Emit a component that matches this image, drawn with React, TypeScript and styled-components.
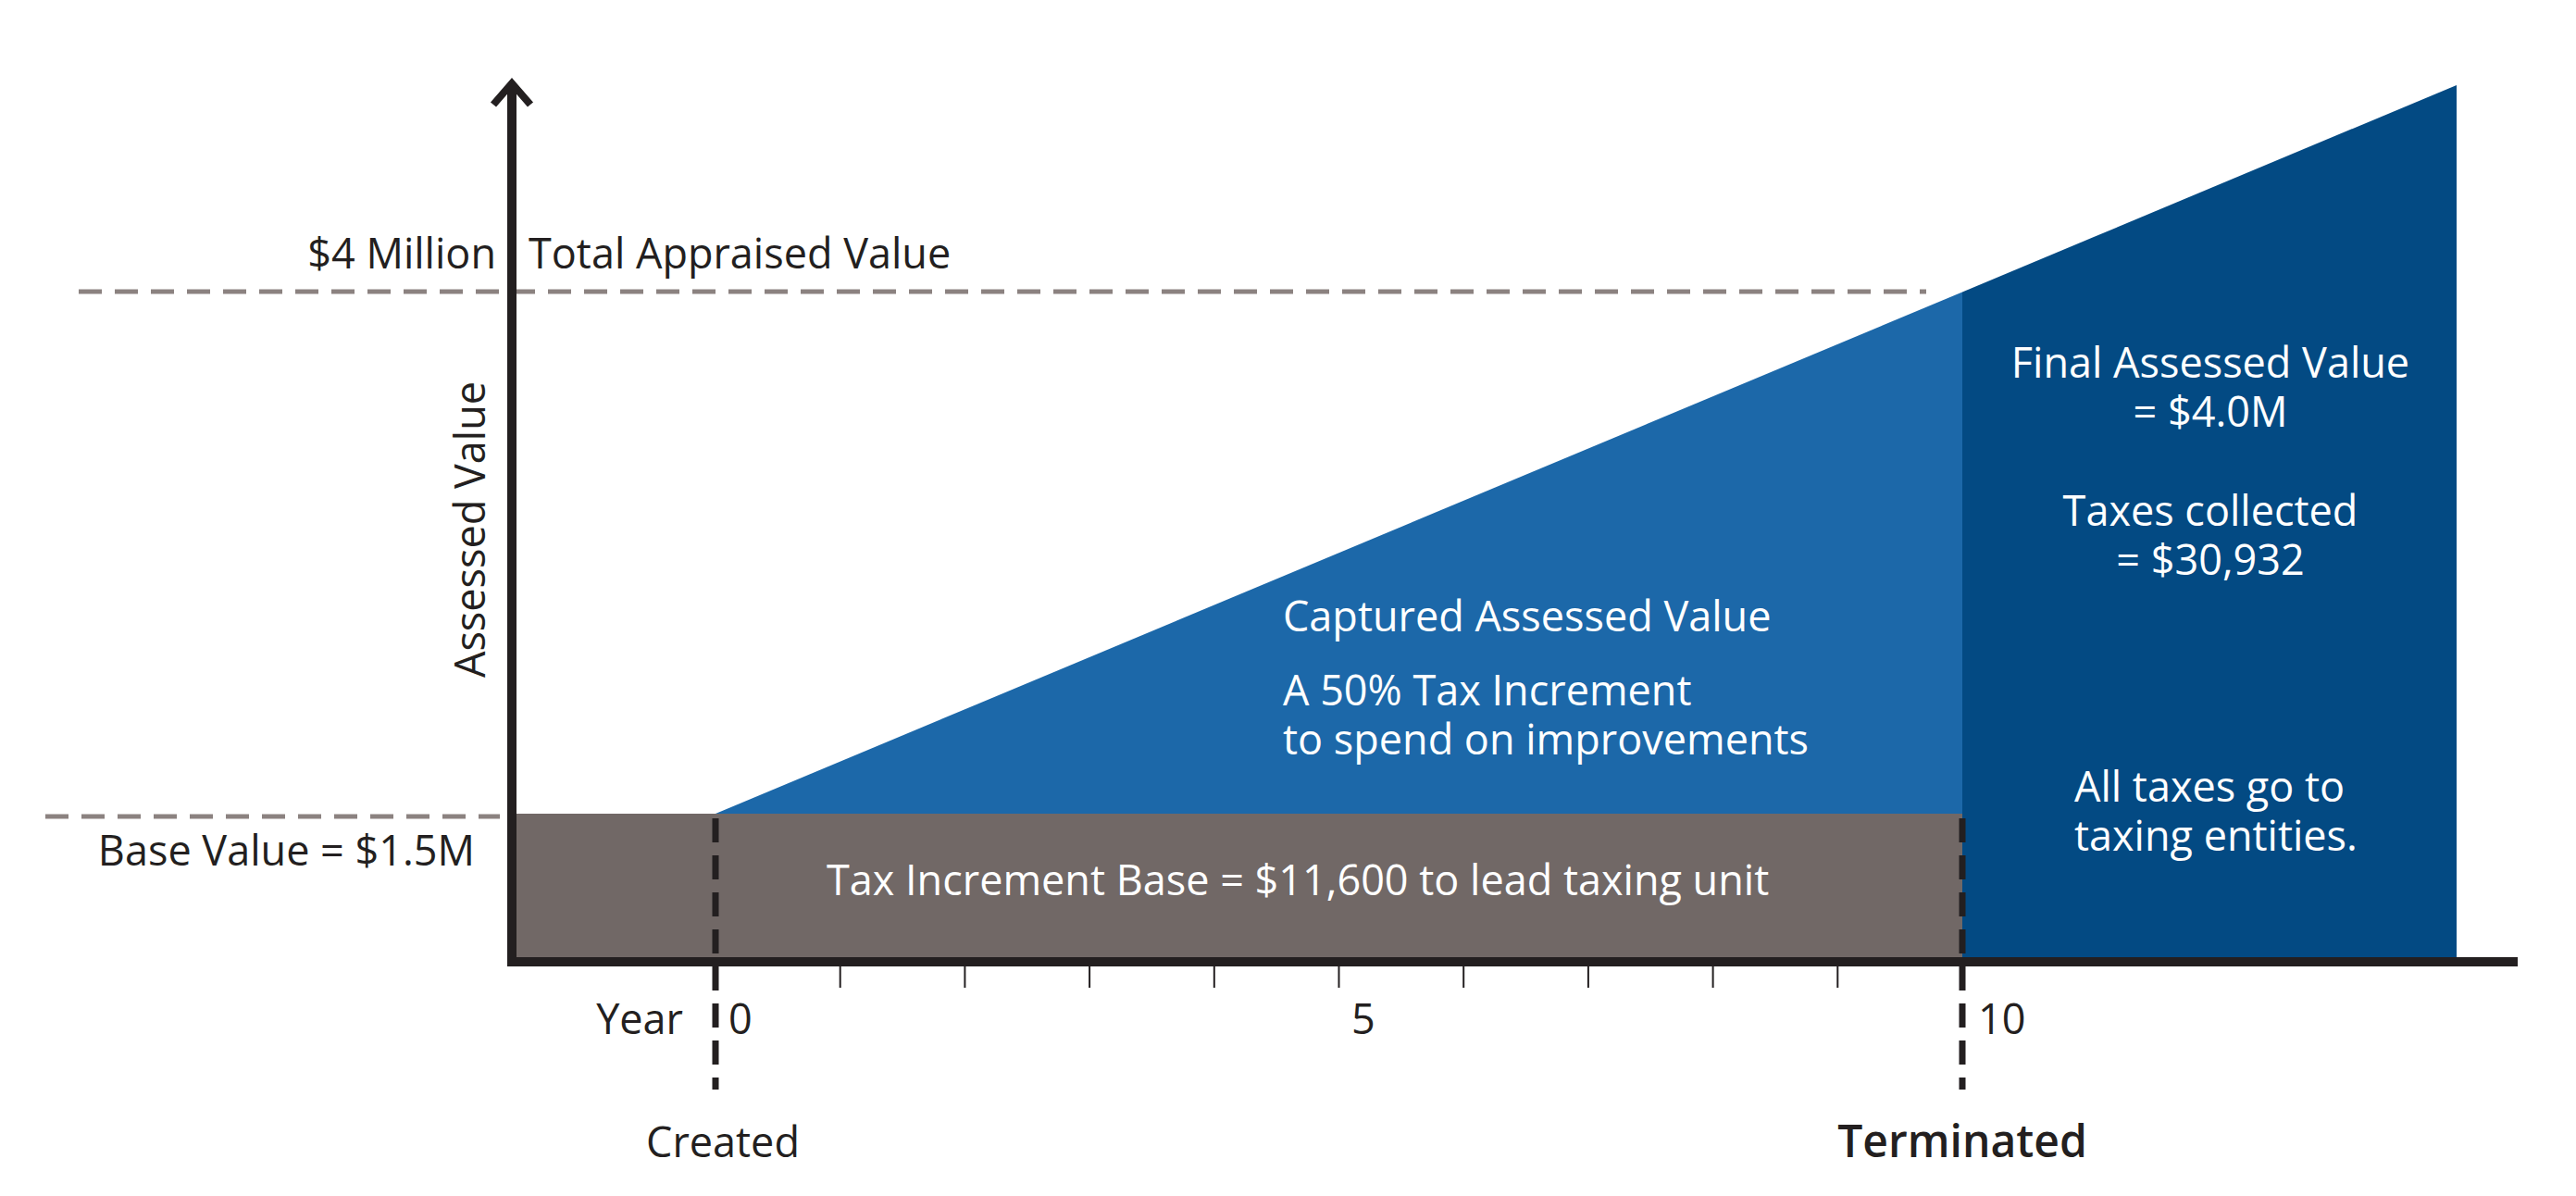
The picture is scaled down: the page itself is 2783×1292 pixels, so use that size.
import React from 'react';
import styled, { createGlobalStyle } from 'styled-components';

const GlobalStyle = createGlobalStyle`
  html, body {
    margin: 0;
    padding: 0;
    background: #ffffff;
  }
`;

const colors = {
  ink: '#231f20',
  dash: '#8b8280',
  base: '#716866',
  captured: '#1c68a9',
  final: '#034a83',
};

const Page = styled.div`
  width: 2783px;
  height: 1292px;
  background: #ffffff;
  overflow: hidden;
`;

const Chart = styled.svg`
  display: block;
  width: 2783px;
  height: 1292px;
`;

const Label = styled.text<{ $light?: boolean; $weight?: number; $size?: number }>`
  font-family: 'Open Sans', 'Noto Sans', sans-serif;
  font-size: ${(p) => p.$size ?? 45}px;
  font-weight: ${(p) => p.$weight ?? 400};
  fill: ${(p) => (p.$light ? '#ffffff' : colors.ink)};
`;

const GuideLine = styled.line`
  stroke: ${colors.dash};
  stroke-width: 5;
  stroke-dasharray: 25 14;
`;

const MarkerLine = styled.line`
  stroke: ${colors.ink};
  stroke-width: 7;
  stroke-dasharray: 26 14;
`;

const Tick = styled.line`
  stroke: ${colors.ink};
  stroke-width: 2;
`;

const Axis = styled.path`
  fill: none;
  stroke: ${colors.ink};
  stroke-width: 10;
`;

const ArrowHead = styled.path`
  fill: none;
  stroke: ${colors.ink};
  stroke-width: 8;
  stroke-linejoin: miter;
`;

// chart geometry (px)
const X0 = 553; // y axis
const YEAR0 = 773;
const YEAR10 = 2120;
const PEAK_X = 2654;
const BASE_Y = 879;
const FLOOR_Y = 1034;
const step = (YEAR10 - YEAR0) / 10;
const slope = (BASE_Y - 92) / (PEAK_X - YEAR0);
const yAt = (x: number) => BASE_Y - slope * (x - YEAR0);

const ticks = [1, 2, 3, 4, 5, 6, 7, 8, 9].map((k) => YEAR0 + step * k);

type Block = {
  x: number;
  y: number;
  anchor?: 'start' | 'middle' | 'end';
  lines: string[];
};

const areaNotes: Block[] = [
  { x: 1386, y: 682, lines: ['Captured Assessed Value'] },
  { x: 1386, y: 762, lines: ['A 50% Tax Increment', 'to spend on improvements'] },
  { x: 893, y: 967, lines: ['Tax Increment Base = $11,600 to lead taxing unit'] },
  { x: 2388, y: 408, anchor: 'middle', lines: ['Final Assessed Value', '= $4.0M'] },
  { x: 2388, y: 568, anchor: 'middle', lines: ['Taxes collected', '= $30,932'] },
  { x: 2241, y: 866, lines: ['All taxes go to', 'taxing entities.'] },
];

const LINE_GAP = 53;

const NoteBlock: React.FC<{ block: Block }> = ({ block }) => (
  <Label x={block.x} y={block.y} textAnchor={block.anchor ?? 'start'} $light>
    {block.lines.map((line, i) => (
      <tspan key={line} x={block.x} dy={i === 0 ? 0 : LINE_GAP}>
        {line}
      </tspan>
    ))}
  </Label>
);

const App: React.FC = () => {
  const cut = yAt(YEAR10);
  return (
    <Page>
      <GlobalStyle />
      <Chart viewBox='0 0 2783 1292' xmlns='http://www.w3.org/2000/svg'>
        {/* areas */}
        <rect x={X0} y={BASE_Y} width={YEAR10 - X0} height={FLOOR_Y - BASE_Y} fill={colors.base} />
        <polygon
          points={`${YEAR0},${BASE_Y} ${YEAR10},${cut} ${YEAR10},${BASE_Y}`}
          fill={colors.captured}
        />
        <polygon
          points={`${YEAR10},${cut} ${PEAK_X},92 ${PEAK_X},${FLOOR_Y} ${YEAR10},${FLOOR_Y}`}
          fill={colors.final}
        />

        {/* guide lines */}
        <GuideLine x1={85} y1={315} x2={2081} y2={315} />
        <GuideLine x1={49} y1={882} x2={540} y2={882} />

        {/* year markers */}
        <MarkerLine x1={YEAR0} y1={884} x2={YEAR0} y2={1177} />
        <MarkerLine x1={YEAR10} y1={884} x2={YEAR10} y2={1177} />
        {ticks.map((x) => (
          <Tick key={x} x1={x} y1={1044} x2={x} y2={1067} />
        ))}

        {/* axes */}
        <Axis d={`M ${X0} 96 V ${FLOOR_Y + 5} H 2720`} />
        <ArrowHead d={`M ${X0 - 20} 113 L ${X0} 90 L ${X0 + 20} 113`} />

        {/* left labels */}
        <Label x={536} y={290} textAnchor='end'>$4 Million</Label>
        <Label x={571} y={290}>Total Appraised Value</Label>
        <Label x={513} y={935} textAnchor='end'>Base Value = $1.5M</Label>
        <Label x={524} y={572} textAnchor='middle' transform='rotate(-90 524 572)'>
          Assessed Value
        </Label>

        {/* x axis labels */}
        <Label x={738} y={1117} textAnchor='end'>Year</Label>
        <Label x={787} y={1117}>0</Label>
        <Label x={1460} y={1117}>5</Label>
        <Label x={2137} y={1117}>10</Label>
        <Label x={781} y={1250} textAnchor='middle'>Created</Label>
        <Label x={2120} y={1250} textAnchor='middle' $weight={600} $size={48}>
          Terminated
        </Label>

        {/* area labels */}
        {areaNotes.map((b) => (
          <NoteBlock key={b.lines[0]} block={b} />
        ))}
      </Chart>
    </Page>
  );
};

export default App;
